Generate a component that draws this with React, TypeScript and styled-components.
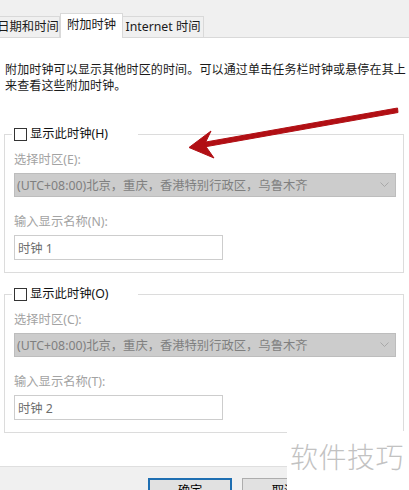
import React from "react";
import styled, { createGlobalStyle } from "styled-components";

const Global = createGlobalStyle`
  html, body { margin: 0; padding: 0; background: #ffffff; overflow: hidden; }
  body {
    font-family: "Noto Sans", "Noto Sans CJK SC", sans-serif;
    font-size: 12px;
    color: #000;
  }
  * { box-sizing: border-box; }
`;

const Page = styled.div`
  position: relative;
  width: 409px;
  height: 490px;
  overflow: hidden;
  display: flex;
  flex-direction: column;
  background: #fff;
`;

const TabStrip = styled.div`
  height: 38px;
  flex-shrink: 0;
  background: #f0f0f0;
  border-bottom: 1px solid #d9d9d9;
  display: flex;
  align-items: flex-end;
  padding-left: 0;
`;

const Tab = styled.div<{ $active?: boolean; $w: number; $first?: boolean }>`
  width: ${(p) => p.$w}px;
  height: ${(p) => (p.$active ? 25 : 21)}px;
  margin-bottom: ${(p) => (p.$active ? -1 : 0)}px;
  margin-left: ${(p) => (p.$first ? -4 : p.$active ? 0 : -1)}px;
  background: ${(p) => (p.$active ? "#ffffff" : "#f0f0f0")};
  border: 1px solid #d9d9d9;
  border-bottom: none;
  display: flex;
  align-items: center;
  justify-content: center;
  padding-bottom: ${(p) => (p.$active ? 3 : 0)}px;
  position: relative;
  z-index: ${(p) => (p.$active ? 1 : 0)};
  font-size: 12.3px;
  line-height: 16px;
  color: #1a1a1a;
  white-space: nowrap;
`;

const Content = styled.div`
  display: flex;
  flex-direction: column;
  padding: 0 5px 0 4px;
`;

const Description = styled.p`
  margin: 24px 0 0 1px;
  font-size: 12px;
  line-height: 16px;
  color: #1a1a1a;
  white-space: nowrap;
  letter-spacing: 0.15px;
`;

const Group = styled.fieldset<{ $top: number }>`
  margin: ${(p) => p.$top}px 0 0 0;
  min-width: 0;
  border: 1px solid #dcdcdc;
  padding: 0 7px 12px 9px;
  display: flex;
  flex-direction: column;
`;

const Legend = styled.legend`
  margin-left: -2px;
  padding: 0 30px 0 2px;
  height: 14px;
  display: flex;
  align-items: center;
  gap: 3px;
  font-size: 12.3px;
  line-height: 14px;
  color: #111;
  white-space: nowrap;
`;

const CheckBox = styled.span`
  width: 13px;
  height: 13px;
  border: 1px solid #333333;
  background: #fff;
  flex-shrink: 0;
`;

const FieldLabel = styled.div<{ $top: number }>`
  margin-top: ${(p) => p.$top}px;
  font-size: 12.3px;
  line-height: 16px;
  color: #a3a3a3;
  white-space: nowrap;
`;

const Combo = styled.div`
  margin-top: 5px;
  height: 24px;
  width: 100%;
  background: #cccccc;
  border: 1px solid #bdbdbd;
  display: flex;
  align-items: center;
  justify-content: space-between;
  padding: 0 6px 0 2px;
  font-size: 12.3px;
  color: #7f7f7f;
  white-space: nowrap;
`;

const TextBox = styled.div`
  margin-top: 5px;
  width: 209px;
  height: 25px;
  border: 1px solid #cdcdcd;
  background: #fff;
  display: flex;
  align-items: center;
  padding-left: 3px;
  font-size: 12.3px;
  color: #6d6d6d;
  white-space: nowrap;
`;

const ButtonBar = styled.div`
  margin-top: 33px;
  flex-shrink: 0;
  height: 60px;
  background: #f0f0f0;
  border-top: 1px solid #dfdfdf;
  display: flex;
  align-items: flex-start;
  gap: 10px;
  padding: 11px 0 0 148px;
`;

const Button = styled.div<{ $primary?: boolean }>`
  width: 84px;
  height: 23px;
  background: #e1e1e1;
  border: ${(p) => (p.$primary ? "2px solid #1f6fb2" : "1px solid #adadad")};
  display: flex;
  align-items: center;
  justify-content: center;
  font-size: 12.3px;
  color: #000;
`;

const Watermark = styled.div`
  position: absolute;
  right: 0;
  bottom: 0;
  width: 122px;
  height: 59px;
  background: #ffffff;
  padding: 9px 0 0 3px;
  font-family: "Noto Sans CJK SC", sans-serif;
  font-weight: 300;
  font-size: 28px;
  line-height: 32px;
  letter-spacing: 0.5px;
  color: #c2c2c2;
  white-space: nowrap;
`;

const ArrowLayer = styled.svg`
  position: absolute;
  left: 0;
  top: 0;
  pointer-events: none;
`;

const Chevron = () => (
  <svg width="9" height="6" viewBox="0 0 9 6">
    <polyline points="0.5,0.5 4.5,4.5 8.5,0.5" fill="none" stroke="#a8a8a8" strokeWidth="1" />
  </svg>
);

const ClockGroup = ({
  top,
  title,
  zone,
  nameLabel,
  name,
}: {
  top: number;
  title: string;
  zone: string;
  nameLabel: string;
  name: string;
}) => (
  <Group $top={top}>
    <Legend>
      <CheckBox />
      {title}
    </Legend>
    <FieldLabel $top={11}>{zone}</FieldLabel>
    <Combo>
      <span>(UTC+08:00)北京，重庆，香港特别行政区，乌鲁木齐</span>
      <Chevron />
    </Combo>
    <FieldLabel $top={17}>{nameLabel}</FieldLabel>
    <TextBox>{name}</TextBox>
  </Group>
);

export default function App() {
  return (
    <>
      <Global />
      <Page>
        <TabStrip>
          <Tab $w={64} $first>日期和时间</Tab>
          <Tab $w={63} $active>附加时钟</Tab>
          <Tab $w={82}>Internet 时间</Tab>
        </TabStrip>
        <Content>
          <Description>
            附加时钟可以显示其他时区的时间。可以通过单击任务栏时钟或悬停在其上
            <br />
            来查看这些附加时钟。
          </Description>
          <ClockGroup
            top={33}
            title="显示此时钟(H)"
            zone="选择时区(E):"
            nameLabel="输入显示名称(N):"
            name="时钟 1"
          />
          <ClockGroup
            top={14}
            title="显示此时钟(O)"
            zone="选择时区(C):"
            nameLabel="输入显示名称(T):"
            name="时钟 2"
          />
        </Content>
        <ButtonBar>
          <Button $primary>确定</Button>
          <Button>取消</Button>
        </ButtonBar>
        <ArrowLayer width="409" height="490" viewBox="0 0 409 490">
          <path
            d="M397.5,108 L398,112.5 L204,147 L203,142.5 Z"
            fill="#b10f14"
            stroke="#b10f14"
            strokeWidth="1"
            strokeLinejoin="round"
          />
          <path d="M189,147.5 L211,131 L204.5,144.5 L214,158 Z" fill="#b10f14" stroke="#b10f14" strokeWidth="1" strokeLinejoin="round" />
        </ArrowLayer>
        <Watermark>软件技巧</Watermark>
      </Page>
    </>
  );
}
